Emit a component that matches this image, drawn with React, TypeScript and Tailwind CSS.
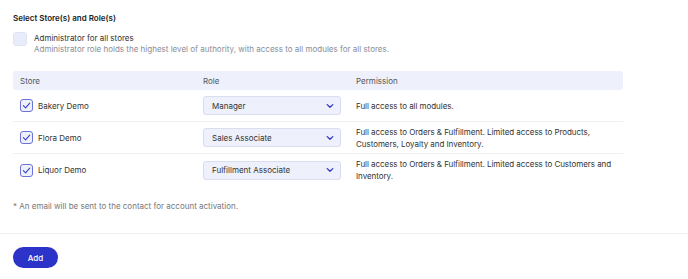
const rows = [
  { store: "Bakery Demo", role: "Manager", perm: "Full access to all modules." },
  {
    store: "Flora Demo",
    role: "Sales Associate",
    perm: "Full access to Orders & Fulfillment. Limited access to Products, Customers, Loyalty and Inventory.",
  },
  {
    store: "Liquor Demo",
    role: "Fulfillment Associate",
    perm: "Full access to Orders & Fulfillment. Limited access to Customers and Inventory.",
  },
];

function Check() {
  return (
    <div className="flex h-[13px] w-[13px] shrink-0 items-center justify-center rounded-[3px] border border-[#6b73d9] bg-[#eef0fc]">
      <svg width="9" height="9" viewBox="0 0 10 10" fill="none">
        <path d="M1.5 5.2 L4 7.6 L8.6 2.4" stroke="#3640c8" strokeWidth="1.2" strokeLinecap="round" strokeLinejoin="round" />
      </svg>
    </div>
  );
}

function Select({ value }: { value: string }) {
  return (
    <div className="flex h-[19px] w-[138px] items-center justify-between rounded-[3px] border border-[#d8ddf0] bg-[#eef1fb] pl-[8px] pr-[6px] text-[8px] text-[#333]">
      <span>{value}</span>
      <svg width="8" height="6" viewBox="0 0 8 6" fill="none">
        <path d="M1.2 1.6 L4 4.3 L6.8 1.6" stroke="#2e37c4" strokeWidth="1.3" strokeLinecap="round" strokeLinejoin="round" />
      </svg>
    </div>
  );
}

export default function App() {
  return (
    <div className="h-[279px] w-[688px] bg-white font-['Inter',sans-serif] text-[#333]">
      <div className="px-[13px] pt-[12px]">
        <h2 className="text-[8px] leading-[12px] font-semibold text-[#222]">Select Store(s) and Role(s)</h2>
        <div className="mt-[7px] flex gap-[7px]">
          <div className="mt-[1px] h-[14px] w-[14px] rounded-[3px] border border-[#dfe4f4] bg-[#e9edfb]" />
          <div className="mt-[2px] leading-[11px]">
            <div className="text-[8px] text-[#333]">Administrator for all stores</div>
            <div className="text-[8px] text-[#8a8d96]">
              Administrator role holds the highest level of authority, with access to all modules for all stores.
            </div>
          </div>
        </div>

        <div className="mt-[16px] w-[610px]">
          <div className="grid h-[19px] grid-cols-[183px_153px_1fr] items-center rounded-[3px] bg-[#eef1fb] px-[7px] text-[8px] text-[#555]">
            <span>Store</span>
            <span>Role</span>
            <span>Permission</span>
          </div>
          {rows.map((r, i) => (
            <div
              key={r.store}
              className={`grid h-[32px] grid-cols-[183px_153px_1fr] items-center pl-[7px] text-[8px] ${i < rows.length - 1 ? "border-b border-[#f0f1f4]" : ""}`}
            >
              <div className="flex items-center gap-[5px]">
                <Check />
                <span>{r.store}</span>
              </div>
              <Select value={r.role} />
              <span className="leading-[12px] tracking-[-0.05px]">{r.perm}</span>
            </div>
          ))}
        </div>

        <p className="mt-[14px] text-[8px] leading-[12px] text-[#777]">* An email will be sent to the contact for account activation.</p>
      </div>
      <div className="mt-[21px] border-t border-[#eeeff2]" />
      <div className="flex px-[13px] pt-[13px]">
        <button className="h-[21px] w-[45px] rounded-full bg-[#2b33c8] text-[8px] font-medium text-white">Add</button>
      </div>
    </div>
  );
}
